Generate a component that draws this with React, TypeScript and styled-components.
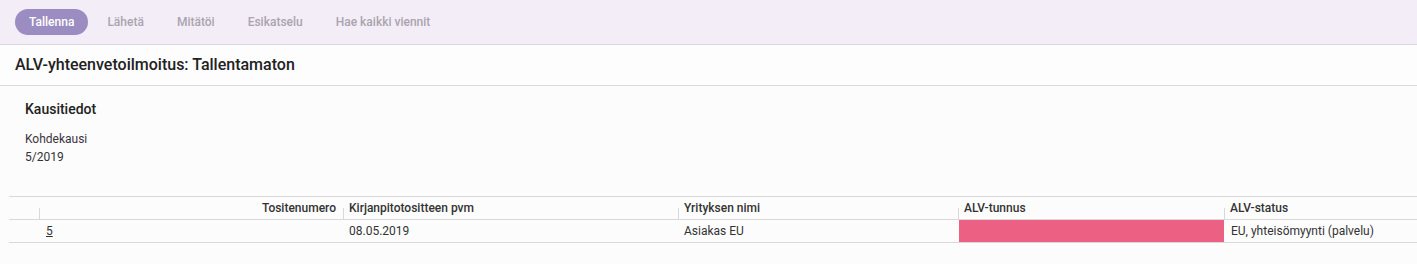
import React from "react";
import styled, { createGlobalStyle } from "styled-components";

const GlobalStyle = createGlobalStyle`
  html, body {
    margin: 0;
    padding: 0;
    background: #fcfcfc;
  }
  body {
    font-family: Roboto, "Noto Sans", Arial, sans-serif;
    color: #333;
    font-size: 12px;
  }
`;

const Page = styled.div`
  display: flex;
  flex-direction: column;
  width: 1417px;
  overflow: hidden;
`;

const Toolbar = styled.div`
  display: flex;
  align-items: center;
  gap: 5px;
  height: 44px;
  padding: 0 15px;
  background: #f3edf7;
  border-bottom: 1px solid #d9d6dc;
`;

const ToolButton = styled.button<{ $primary?: boolean }>`
  height: 26px;
  padding: 0 14px;
  border: none;
  border-radius: 13px;
  font-family: Roboto, "Noto Sans", Arial, sans-serif;
  font-size: 12px;
  font-weight: 500;
  background: ${(p) => (p.$primary ? "#9b8dc1" : "transparent")};
  color: ${(p) => (p.$primary ? "#ffffff" : "#aaa4ae")};
  cursor: pointer;
`;

const TitleBar = styled.div`
  display: flex;
  align-items: center;
  height: 40px;
  padding: 0 15px;
  border-bottom: 1px solid #d9d9d9;
  background: #fdfdfd;
`;

const Title = styled.h1`
  margin: 0;
  font-size: 16px;
  font-weight: 500;
  color: #222;
  line-height: 40px;
`;

const Section = styled.section`
  display: flex;
  flex-direction: column;
  padding: 13px 25px 0;
`;

const SectionTitle = styled.h2`
  margin: 0 0 11px;
  font-size: 14px;
  font-weight: 500;
  line-height: 20px;
  color: #222;
`;

const FieldLabel = styled.div`
  line-height: 18px;
  color: #3a3340;
`;

const FieldValue = styled.div`
  line-height: 18px;
  color: #333;
`;

const Table = styled.div`
  display: flex;
  flex-direction: column;
  margin: 30px 0 0 9px;
  border-top: 1px solid #d9d9d9;
`;

const Row = styled.div`
  display: grid;
  grid-template-columns: 30px 304px 335px 280px 266px 1fr;
  height: 22px;
  border-bottom: 1px solid #d9d9d9;
`;

const HeadCell = styled.div<{ $right?: boolean; $sep?: boolean }>`
  position: relative;
  padding: 0 7px 0 6px;
  line-height: 22px;
  font-weight: 500;
  color: #333;
  white-space: nowrap;
  text-align: ${(p) => (p.$right ? "right" : "left")};
  &::before {
    content: "";
    display: ${(p) => (p.$sep ? "block" : "none")};
    position: absolute;
    left: 0;
    bottom: 0;
    width: 1px;
    height: 11px;
    background: #d9d9d9;
  }
`;

const Cell = styled.div<{ $error?: boolean; $pad?: number }>`
  padding: 0 6px 0 ${(p) => p.$pad ?? 6}px;
  line-height: 22px;
  color: #333;
  white-space: nowrap;
  background: ${(p) => (p.$error ? "#ec6084" : "transparent")};
  margin-left: ${(p) => (p.$error ? "1px" : "0")};
`;

const Link = styled.a`
  color: #333;
  text-decoration: underline;
`;

const buttons = ["Lähetä", "Mitätöi", "Esikatselu", "Hae kaikki viennit"];

export default function App() {
  return (
    <>
      <GlobalStyle />
      <Page>
        <Toolbar>
          <ToolButton $primary>Tallenna</ToolButton>
          {buttons.map((b) => (
            <ToolButton key={b}>{b}</ToolButton>
          ))}
        </Toolbar>
        <TitleBar>
          <Title>ALV-yhteenvetoilmoitus: Tallentamaton</Title>
        </TitleBar>
        <Section>
          <SectionTitle>Kausitiedot</SectionTitle>
          <FieldLabel>Kohdekausi</FieldLabel>
          <FieldValue>5/2019</FieldValue>
        </Section>
        <Table>
          <Row>
            <HeadCell />
            <HeadCell $right $sep>Tositenumero</HeadCell>
            <HeadCell $sep>Kirjanpitotositteen pvm</HeadCell>
            <HeadCell $sep>Yrityksen nimi</HeadCell>
            <HeadCell $sep>ALV-tunnus</HeadCell>
            <HeadCell $sep>ALV-status</HeadCell>
          </Row>
          <Row>
            <Cell />
            <Cell $pad={7}>
              <Link href="#">5</Link>
            </Cell>
            <Cell>08.05.2019</Cell>
            <Cell>Asiakas EU</Cell>
            <Cell $error />
            <Cell $pad={7}>EU, yhteisömyynti (palvelu)</Cell>
          </Row>
        </Table>
      </Page>
    </>
  );
}
